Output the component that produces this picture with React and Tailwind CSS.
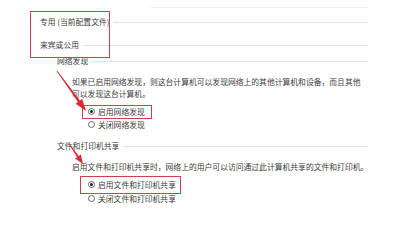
import React from 'react';

const Heading = ({ label, className = '' }) => (
  <div className={`flex h-[16px] items-center gap-[4px] ${className}`}>
    <span className="whitespace-nowrap">{label}</span>
    <div className="h-px flex-1 bg-[#e2e2e2]" />
  </div>
);

const Radio = ({ checked, label }) => (
  <span className="inline-flex items-center gap-[3px] whitespace-nowrap">
    <span className="flex h-[7px] w-[7px] items-center justify-center rounded-full border border-[#6a6a6a] bg-white">
      {checked && <span className="h-[3px] w-[3px] rounded-full bg-[#222]" />}
    </span>
    <span>{label}</span>
  </span>
);

// tapered annotation arrow, points computed from start/tip
const arrowPoints = ([sx, sy], [tx, ty], head, half, w0, w1) => {
  const len = Math.hypot(tx - sx, ty - sy);
  const dx = (tx - sx) / len;
  const dy = (ty - sy) / len;
  const nx = -dy;
  const ny = dx;
  const bx = tx - dx * head;
  const by = ty - dy * head;
  const p = (x, y) => `${x.toFixed(2)},${y.toFixed(2)}`;
  return [
    p(sx + (nx * w0) / 2, sy + (ny * w0) / 2),
    p(bx + (nx * w1) / 2, by + (ny * w1) / 2),
    p(bx + nx * half, by + ny * half),
    p(tx, ty),
    p(bx - nx * half, by - ny * half),
    p(bx - (nx * w1) / 2, by - (ny * w1) / 2),
    p(sx - (nx * w0) / 2, sy - (ny * w0) / 2),
  ].join(' ');
};

export default function App() {
  return (
    <div className="relative h-[221px] w-[397px] overflow-hidden bg-white font-['Noto_Sans_CJK_SC','Noto_Sans',sans-serif] text-[7.8px] leading-none text-[#3c3c3c]">
      <div className="w-[368px]">
        {/* faint divider from the row above */}
        <div className="flex h-[14px] items-center pl-[150px]">
          <div className="h-px flex-1 bg-[#f3f3f3]" />
        </div>

        {/* profile rows */}
        <div className="relative">
          <Heading label="专用 (当前配置文件)" className="pl-[40px]" />
          <Heading label="来宾或公用" className="mt-[7px] pl-[40px]" />
          <div className="absolute left-[30px] top-[-3px] h-[47px] w-[80px] border-[1.5px] border-[#cf3f4c]" />
        </div>

        {/* network discovery */}
        <Heading label="网络发现" className="pl-[57px]" />
        <div className="mt-[7px] overflow-hidden whitespace-nowrap pl-[72px] leading-[12px]">
          <div>如果已启用网络发现，则这台计算机可以发现网络上的其他计算机和设备，而且其他</div>
          <div>可以发现这台计算机。</div>
        </div>
        <div className="mt-[5px] pl-[82px]">
          <div className="inline-flex h-[14px] items-center border-[1.5px] border-[#cf3f4c] pl-[5px] pr-[6px]">
            <Radio checked label="启用网络发现" />
          </div>
        </div>
        <div className="flex h-[11px] items-center pl-[88px]">
          <Radio label="关闭网络发现" />
        </div>

        {/* file and printer sharing */}
        <Heading label="文件和打印机共享" className="mt-[8px] pl-[57px]" />
        <div className="mt-[7px] overflow-hidden whitespace-nowrap pl-[72px] leading-[12px]">
          启用文件和打印机共享时，网络上的用户可以访问通过此计算机共享的文件和打印机。
        </div>
        <div className="mt-[3px] pl-[80px]">
          <div className="inline-flex h-[18px] items-center border-[1.5px] border-[#cf3f4c] pl-[7px] pr-[4px]">
            <Radio checked label="启用文件和打印机共享" />
          </div>
        </div>
        <div className="flex h-[9px] items-center pl-[88px]">
          <Radio label="关闭文件和打印机共享" />
        </div>
      </div>

      {/* annotation arrows */}
      <svg className="pointer-events-none absolute inset-0" width="397" height="221" viewBox="0 0 397 221">
        <polygon points={arrowPoints([57, 71], [86, 111], 12, 4, 0.8, 2.4)} fill="#dc2a32" />
        <polygon points={arrowPoints([70, 145], [83, 164], 9, 3.5, 0.8, 2)} fill="#dc2a32" />
      </svg>
    </div>
  );
}
